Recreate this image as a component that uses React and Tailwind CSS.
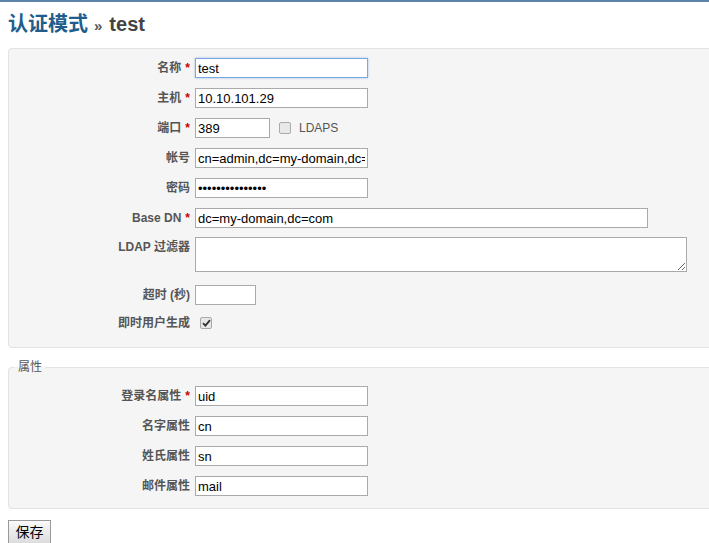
import React from "react";

const font = { fontFamily: '"Liberation Sans", "Noto Sans CJK SC", sans-serif' };

function Label({ children, required }) {
    return (
        <div className="w-[186px] shrink-0 pr-[5px] text-right text-[12px] font-bold leading-[20px] text-[#555]">
            {children}
            {required && <span className="ml-1 text-[#c00]">*</span>}
        </div>
    );
}

function TextInput({ value, width = "w-[173px]", focus, type = "text" }) {
    return (
        <input
            type={type}
            defaultValue={value}
            className={
                "h-[20px] border bg-white px-[2px] text-[13px] text-black outline-none " +
                width +
                (focus ? " border-[#7ea6df] shadow-[0_0_2px_#9ab8e8]" : " border-[#aaa]")
            }
        />
    );
}

function Check({ checked }) {
    return (
        <span className="inline-flex h-[12px] w-[12px] items-center justify-center rounded-[2px] border border-[#aaa] bg-[#e8e8e8]">
            {checked && (
                <svg width="9" height="8" viewBox="0 0 9 8">
                    <path d="M1 4.2 L3.4 6.6 L8 1.2" stroke="#333" strokeWidth="1.8" fill="none" />
                </svg>
            )}
        </span>
    );
}

function Row({ label, required, children, className = "" }) {
    return (
        <div className={"flex items-start " + className}>
            <Label required={required}>{label}</Label>
            {children}
        </div>
    );
}

export default function App() {
    return (
        <div className="min-h-screen w-full overflow-hidden border-t-2 border-[#5d84ab] bg-white" style={font}>
            <div className="w-[740px] px-2">
                <h1 className="mt-[9px] flex items-baseline text-[20px] font-bold leading-[26px]">
                    <span className="text-[#205d8c]">认证模式</span>
                    <span className="ml-[6px] text-[15px] text-[#555]">»</span>
                    <span className="ml-[7px] text-[#444]">test</span>
                </h1>

                {/* Main settings panel */}
                <div className="mt-[9px] flex flex-col gap-[10px] rounded-[4px] border border-[#e3e3e3] bg-[#f5f5f5] pt-[9px] pb-[14px]">
                    <Row label="名称" required>
                        <TextInput value="test" focus />
                    </Row>
                    <Row label="主机" required>
                        <TextInput value="10.10.101.29" />
                    </Row>
                    <Row label="端口" required>
                        <TextInput value="389" width="w-[75px]" />
                        <div className="ml-[9px] flex h-[20px] items-center gap-[8px] text-[12px] text-[#555]">
                            <Check />
                            <span>LDAPS</span>
                        </div>
                    </Row>
                    <Row label="帐号">
                        <TextInput value="cn=admin,dc=my-domain,dc=com" />
                    </Row>
                    <Row label="密码">
                        <TextInput value="123456789012345" type="password" />
                    </Row>
                    <Row label="Base DN" required>
                        <TextInput value="dc=my-domain,dc=com" width="w-[453px]" />
                    </Row>
                    <Row label="LDAP 过滤器" className="-mt-[1px]">
                        <textarea className="block h-[35px] w-[492px] border border-[#aaa] bg-white px-[2px] text-[13px] outline-none" />
                    </Row>
                    <Row label="超时 (秒)" className="mt-[3px]">
                        <TextInput value="" width="w-[61px]" />
                    </Row>
                    <Row label="即时用户生成" className="-mt-[2px]">
                        <div className="flex h-[20px] items-center pl-[5px]">
                            <Check checked />
                        </div>
                    </Row>
                </div>

                {/* Attributes fieldset */}
                <fieldset className="mt-[13px] rounded-[4px] border border-[#e3e3e3] bg-[#f5f5f5] pt-[13px] pb-[12px]">
                    <legend className="ml-[6px] px-[3px] text-[12px] leading-[12px] text-[#555]">属性</legend>
                    <div className="flex flex-col gap-[10px]">
                        <Row label="登录名属性" required>
                            <TextInput value="uid" />
                        </Row>
                        <Row label="名字属性">
                            <TextInput value="cn" />
                        </Row>
                        <Row label="姓氏属性">
                            <TextInput value="sn" />
                        </Row>
                        <Row label="邮件属性">
                            <TextInput value="mail" />
                        </Row>
                    </div>
                </fieldset>

                <button
                    type="button"
                    className="mt-[11px] h-[24px] w-[43px] border border-[#999] bg-gradient-to-b from-[#fafafa] to-[#dcdcdc] text-[14px] text-black"
                >
                    保存
                </button>
            </div>
        </div>
    );
}
